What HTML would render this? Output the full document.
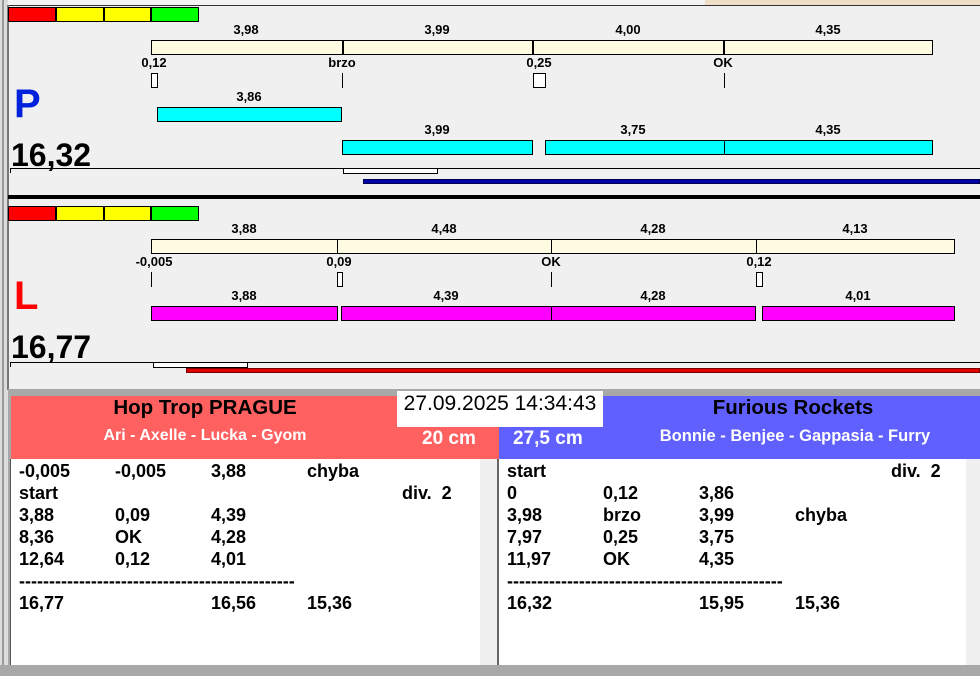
<!DOCTYPE html>
<html><head><meta charset="utf-8"><style>
*{margin:0;padding:0;box-sizing:border-box}
body{width:980px;height:676px;background:#f0f0f0;position:relative;overflow:hidden;font-family:"Liberation Sans",Arial,sans-serif}
div{position:absolute}
.t{font-size:13px;font-weight:bold;color:#000;transform:translateX(-50%);white-space:nowrap;line-height:14px}
.b{border:1px solid #000}
.r{font-size:18px;font-weight:bold;line-height:22px;white-space:nowrap}
</style></head><body>
<div style="left:0;top:0;width:980px;height:5px;background:#f4f4f4"></div>
<div style="left:705px;top:0;width:275px;height:5px;background:#eedfc6"></div>
<div style="left:7px;top:5px;width:973px;height:1px;background:#333"></div>
<div style="left:0;top:0;width:8px;height:676px;background:#dcdcdc"></div>
<div style="left:2px;top:0;width:2px;height:676px;background:#999"></div>
<div style="left:7px;top:5px;width:2px;height:385px;background:#777"></div>

<!-- P section -->
<div style="left:8px;top:7px;width:48px;height:15px;background:#f00;border:1px solid #000"></div>
<div style="left:56px;top:7px;width:48px;height:15px;background:#ff0;border:1px solid #000"></div>
<div style="left:104px;top:7px;width:47px;height:15px;background:#ff0;border:1px solid #000"></div>
<div style="left:151px;top:7px;width:48px;height:15px;background:#0f0;border:1px solid #000"></div>

<div class="t" style="left:246px;top:23px">3,98</div>
<div class="t" style="left:437px;top:23px">3,99</div>
<div class="t" style="left:628px;top:23px">4,00</div>
<div class="t" style="left:828px;top:23px">4,35</div>
<div class="b" style="left:151px;top:40px;width:192px;height:15px;background:#fffbe2"></div>
<div class="b" style="left:342px;top:40px;width:192px;height:15px;background:#fffbe2;border-left-width:2px"></div>
<div class="b" style="left:532px;top:40px;width:193px;height:15px;background:#fffbe2;border-left-width:2px"></div>
<div class="b" style="left:723px;top:40px;width:210px;height:15px;background:#fffbe2;border-left-width:2px"></div>
<div class="t" style="left:154px;top:56px">0,12</div>
<div class="t" style="left:342px;top:56px">brzo</div>
<div class="t" style="left:539px;top:56px">0,25</div>
<div class="t" style="left:723px;top:56px">OK</div>
<div class="b" style="left:151px;top:73px;width:7px;height:15px;background:#fff"></div>
<div style="left:342px;top:73px;width:1px;height:15px;background:#000"></div>
<div class="b" style="left:533px;top:73px;width:13px;height:15px;background:#fff"></div>
<div style="left:724px;top:73px;width:1px;height:15px;background:#000"></div>

<div style="left:14px;top:81px;font-size:40px;font-weight:bold;color:#0022dd;line-height:46px">P</div>
<div class="t" style="left:249px;top:90px">3,86</div>
<div class="b" style="left:157px;top:107px;width:185px;height:15px;background:#0ff"></div>
<div class="t" style="left:437px;top:123px">3,99</div>
<div class="t" style="left:633px;top:123px">3,75</div>
<div class="t" style="left:828px;top:123px">4,35</div>
<div class="b" style="left:342px;top:140px;width:191px;height:15px;background:#0ff"></div>
<div class="b" style="left:545px;top:140px;width:180px;height:15px;background:#0ff"></div>
<div class="b" style="left:724px;top:140px;width:209px;height:15px;background:#0ff"></div>
<div style="left:11px;top:137px;font-size:32px;font-weight:bold;line-height:36px">16,32</div>
<div style="left:10px;top:168px;width:970px;height:1px;background:#000"></div>
<div style="left:10px;top:168px;width:1px;height:5px;background:#000"></div>
<div class="b" style="left:343px;top:168px;width:95px;height:6px;background:#fff"></div>
<div style="left:363px;top:179px;width:617px;height:5px;background:#0000a8;border:1px solid #000050"></div>
<div style="left:8px;top:195px;width:972px;height:4px;background:#000"></div>

<!-- L section -->
<div style="left:8px;top:206px;width:48px;height:15px;background:#f00;border:1px solid #000"></div>
<div style="left:56px;top:206px;width:48px;height:15px;background:#ff0;border:1px solid #000"></div>
<div style="left:104px;top:206px;width:47px;height:15px;background:#ff0;border:1px solid #000"></div>
<div style="left:151px;top:206px;width:48px;height:15px;background:#0f0;border:1px solid #000"></div>

<div class="t" style="left:244px;top:222px">3,88</div>
<div class="t" style="left:444px;top:222px">4,48</div>
<div class="t" style="left:653px;top:222px">4,28</div>
<div class="t" style="left:855px;top:222px">4,13</div>
<div class="b" style="left:151px;top:239px;width:187px;height:15px;background:#fffbe2"></div>
<div class="b" style="left:337px;top:239px;width:215px;height:15px;background:#fffbe2"></div>
<div class="b" style="left:551px;top:239px;width:206px;height:15px;background:#fffbe2"></div>
<div class="b" style="left:756px;top:239px;width:199px;height:15px;background:#fffbe2"></div>
<div class="t" style="left:154px;top:255px">-0,005</div>
<div class="t" style="left:339px;top:255px">0,09</div>
<div class="t" style="left:551px;top:255px">OK</div>
<div class="t" style="left:759px;top:255px">0,12</div>
<div style="left:151px;top:272px;width:1px;height:15px;background:#000"></div>
<div class="b" style="left:337px;top:272px;width:6px;height:15px;background:#fff"></div>
<div style="left:551px;top:272px;width:1px;height:15px;background:#000"></div>
<div class="b" style="left:756px;top:272px;width:7px;height:15px;background:#fff"></div>

<div style="left:14px;top:273px;font-size:40px;font-weight:bold;color:#f00;line-height:46px">L</div>
<div class="t" style="left:244px;top:289px">3,88</div>
<div class="t" style="left:446px;top:289px">4,39</div>
<div class="t" style="left:653px;top:289px">4,28</div>
<div class="t" style="left:858px;top:289px">4,01</div>
<div class="b" style="left:151px;top:306px;width:187px;height:15px;background:#f0f"></div>
<div class="b" style="left:341px;top:306px;width:211px;height:15px;background:#f0f"></div>
<div class="b" style="left:551px;top:306px;width:205px;height:15px;background:#f0f"></div>
<div class="b" style="left:762px;top:306px;width:193px;height:15px;background:#f0f"></div>
<div style="left:11px;top:329px;font-size:32px;font-weight:bold;line-height:36px">16,77</div>
<div style="left:10px;top:362px;width:970px;height:1px;background:#000"></div>
<div style="left:10px;top:362px;width:1px;height:5px;background:#000"></div>
<div class="b" style="left:153px;top:362px;width:95px;height:6px;background:#fff"></div>
<div style="left:186px;top:368px;width:794px;height:5px;background:#e00000;border:1px solid #700"></div>

<!-- bottom panel -->
<div style="left:8px;top:389px;width:972px;height:7px;background:#a8a8a8"></div>
<div style="left:8px;top:396px;width:3px;height:270px;background:#a8a8a8"></div>
<div style="left:11px;top:396px;width:488px;height:63px;background:#ff6060"></div>
<div style="left:499px;top:396px;width:481px;height:63px;background:#6060ff"></div>
<div style="left:397px;top:391px;width:206px;height:36px;background:#fff;font-size:21px;line-height:26px;text-align:center">27.09.2025 14:34:43</div>
<div style="left:205px;top:396px;transform:translateX(-50%);font-size:20.5px;font-weight:bold;white-space:nowrap;line-height:24px">Hop Trop PRAGUE</div>
<div style="left:205px;top:427px;transform:translateX(-50%);font-size:16px;font-weight:bold;color:#fff;white-space:nowrap;line-height:18px">Ari - Axelle - Lucka - Gyom</div>
<div style="left:422px;top:428px;font-size:19px;font-weight:bold;color:#fff;white-space:nowrap;line-height:22px">20 cm</div>
<div style="left:513px;top:428px;font-size:19px;font-weight:bold;color:#fff;white-space:nowrap;line-height:22px">27,5 cm</div>
<div style="left:793px;top:396px;transform:translateX(-50%);font-size:20.5px;font-weight:bold;white-space:nowrap;line-height:24px">Furious Rockets</div>
<div style="left:795px;top:427px;transform:translateX(-50%);font-size:16.5px;font-weight:bold;color:#fff;white-space:nowrap;line-height:18px">Bonnie - Benjee - Gappasia - Furry</div>

<div style="left:10px;top:459px;width:488px;height:206px;background:#fff;border-left:1px solid #555"></div>
<div style="left:480px;top:459px;width:17px;height:206px;background:#f0f0f0"></div>
<div style="left:497px;top:459px;width:2px;height:206px;background:#666"></div>
<div style="left:499px;top:459px;width:481px;height:206px;background:#fff"></div>
<div style="left:966px;top:459px;width:14px;height:206px;background:#f0f0f0"></div>
<div style="left:0;top:665px;width:980px;height:11px;background:#a8a8a8"></div>

<!-- left list -->
<div class="r" style="left:19px;top:460px">-0,005<br>start<br>3,88<br>8,36<br>12,64<br>----------------------------------------------<br>16,77</div>
<div class="r" style="left:115px;top:460px">-0,005<br><br>0,09<br>OK<br>0,12</div>
<div class="r" style="left:211px;top:460px">3,88<br><br>4,39<br>4,28<br>4,01<br><br>16,56</div>
<div class="r" style="left:307px;top:460px">chyba<br><br><br><br><br><br>15,36</div>
<div class="r" style="left:402px;top:482px">div.&nbsp; 2</div>
<!-- right list -->
<div class="r" style="left:507px;top:460px">start<br>0<br>3,98<br>7,97<br>11,97<br>----------------------------------------------<br>16,32</div>
<div class="r" style="left:603px;top:460px"><br>0,12<br>brzo<br>0,25<br>OK</div>
<div class="r" style="left:699px;top:460px"><br>3,86<br>3,99<br>3,75<br>4,35<br><br>15,95</div>
<div class="r" style="left:795px;top:460px"><br><br>chyba<br><br><br><br>15,36</div>
<div class="r" style="left:891px;top:460px">div.&nbsp; 2</div>
</body></html>
